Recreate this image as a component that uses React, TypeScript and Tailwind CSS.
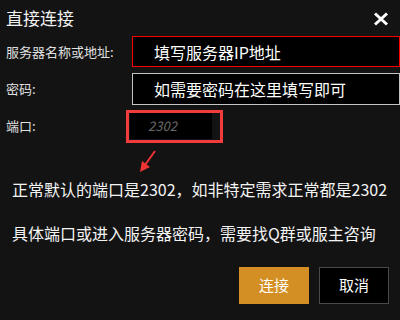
import React from "react";

const font = { fontFamily: '"Noto Sans CJK SC", "Noto Sans", sans-serif' };

export default function App() {
  return (
    <div
      className="relative w-[400px] h-[320px] bg-[#131313] text-white overflow-hidden"
      style={font}
    >
      {/* header */}
      <div className="flex items-center justify-between h-[36px] pl-[6px] pr-[11px]">
        <span className="text-[17px] leading-[20px] text-[#f2f2f2]">直接连接</span>
        <svg width="16" height="14" viewBox="0 0 16 14" className="mt-[1px]">
          <path d="M2 1.5 L14 12.5 M14 1.5 L2 12.5" stroke="#fff" strokeWidth="3" strokeLinecap="butt" />
        </svg>
      </div>

      {/* server */}
      <div className="flex items-center h-[31px] pl-[6px]">
        <span className="w-[126px] text-[13px] leading-[16px] text-[#e0e0e0]">服务器名称或地址:</span>
        <div className="flex-1 h-full bg-black border border-[#ff0000] flex items-center pl-[21px] text-[16px] leading-[20px] text-white">
          填写服务器IP地址
        </div>
      </div>

      {/* password */}
      <div className="flex items-center h-[32px] mt-[6px] pl-[6px]">
        <span className="w-[126px] text-[13px] leading-[16px] text-[#e0e0e0]">密码:</span>
        <div className="flex-1 h-full bg-black border border-[#c4c4c4] flex items-center pl-[21px] text-[16px] leading-[20px] text-white">
          如需要密码在这里填写即可
        </div>
      </div>

      {/* port */}
      <div className="flex items-center h-[26px] mt-[8px] pl-[6px]">
        <span className="w-[124px] text-[13px] leading-[16px] text-[#e0e0e0]">端口:</span>
        <div className="w-[82px] h-full bg-black flex items-center pl-[18px] text-[13px] italic leading-[16px] text-[#6a6a6a]">
          2302
        </div>
      </div>

      <p className="mt-[40px] pl-[12px] text-[16px] leading-[20px] text-[#f4f4f4] whitespace-nowrap">
        正常默认的端口是2302，如非特定需求正常都是2302
      </p>
      <p className="mt-[24px] pl-[12px] text-[16px] leading-[20px] text-[#f4f4f4] whitespace-nowrap">
        具体端口或进入服务器密码，需要找Q群或服主咨询
      </p>

      <div className="flex justify-end gap-[10px] mt-[24px] pr-[11px]">
        <button className="w-[70px] h-[37px] bg-[#d38f23] text-[15px] text-white">连接</button>
        <button className="w-[70px] h-[37px] bg-black border border-[#4a4a4a] text-[15px] text-white">取消</button>
      </div>

      {/* annotation overlay */}
      <div className="absolute left-[126px] top-[110px] w-[97px] h-[33px] border-[3px] border-[#f23b3b]" />
      <svg className="absolute left-[136px] top-[148px]" width="24" height="28" viewBox="0 0 24 28">
        <path d="M19 3 L9 17" stroke="#f03434" strokeWidth="2" />
        <path d="M4 24 L6 13 L14 19 Z" fill="#f03434" />
      </svg>
    </div>
  );
}
